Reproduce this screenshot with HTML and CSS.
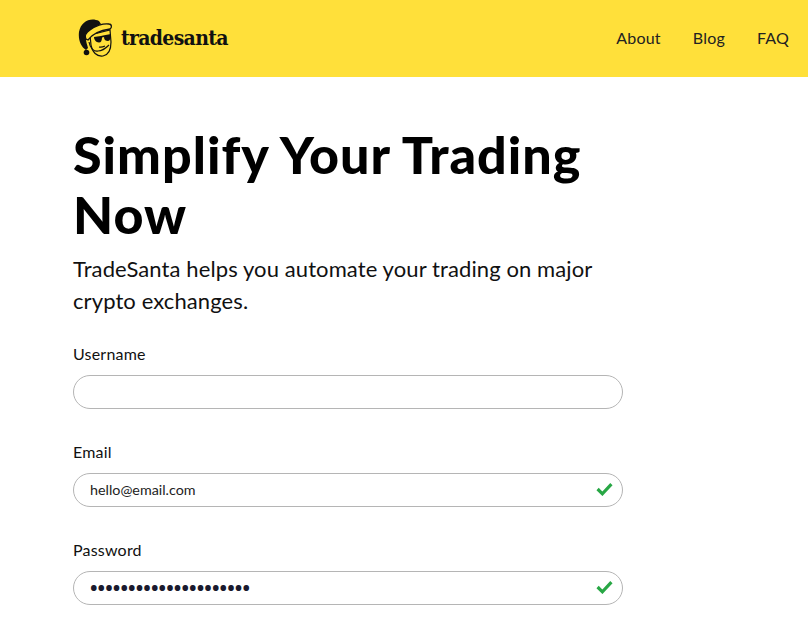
FILE: index.html
```html
<!DOCTYPE html>
<html>
<head>
<meta charset="utf-8">
<title>TradeSanta</title>
<link rel="stylesheet" href="styles.css">
</head>
<body>
<header class="topbar">
  <a class="logo" href="#">
    <svg class="logo-icon" width="38" height="41" viewBox="0 0 38 41">
      <path d="M22 3C14-1 4 3 2 14c-1 8 2 15 7 18l2-2c-1-4-2-6-2-9 3-7 9-12 15-15z" fill="#111"/>
      <path d="M13 17l1 10c1 7 6 12 12 11 5-1 8-6 8-14l-1-12z" fill="#ffe03a" stroke="#111" stroke-width="1.200"/>
      <path d="M9 21C7 17 10 14 13 12 18 8 26 5 32 6c3 0 3 4 1 5-7 1-17 4-22 11z" fill="#ffe03a" stroke="#111" stroke-width="1.300"/>
      <path d="M17 19l7-1 2-.5 8-1.500c0 4-1 7-3 7-2 0-4-1-4-4l-2 .5c0 3-1 5-3 5-3 0-5-3-5-5.500z" fill="#111"/>
      <path d="M12 24c1 6 5 10 9 9 4 0 7-2 11-6" fill="none" stroke="#111" stroke-width="1.200"/>
      <path d="M22 29c2 .5 4 0 6-1" fill="none" stroke="#111" stroke-width="1.200"/>
      <circle cx="9.500" cy="34.500" r="2.800" fill="#111"/>
    </svg>
    <span class="logo-text">tradesanta</span>
  </a>
  <nav class="nav">
    <a href="#">About</a>
    <a href="#">Blog</a>
    <a href="#">FAQ</a>
  </nav>
</header>
<main class="content">
  <h1>Simplify Your Trading Now</h1>
  <p class="lead">TradeSanta helps you automate your trading on major crypto exchanges.</p>
  <form>
    <div class="field">
      <label>Username</label>
      <div class="input"></div>
    </div>
    <div class="field">
      <label>Email</label>
      <div class="input">hello@email.com
        <svg class="check" width="17" height="14" viewBox="0 0 16 13"><path d="M1.500 6.500l4.500 4.500 8.500-9" fill="none" stroke="#28a745" stroke-width="3"/></svg>
      </div>
    </div>
    <div class="field">
      <label>Password</label>
      <div class="input dots">•••••••••••••••••••••
        <svg class="check" width="17" height="14" viewBox="0 0 16 13"><path d="M1.500 6.500l4.500 4.500 8.500-9" fill="none" stroke="#28a745" stroke-width="3"/></svg>
      </div>
    </div>
  </form>
</main>
</body>
</html>
```

FILE: styles.css
```css
html, body { margin: 0; padding: 0; height: 623px; overflow: hidden; }
body { font-family: Lato, "Open Sans", sans-serif; color: #000; background: #fff; }
a { color: inherit; text-decoration: none; }

.topbar { display: flex; align-items: center; justify-content: space-between; box-sizing: border-box; height: 77px; background: #ffe03a; padding: 0 19px 2px 77px; }
.logo { display: flex; align-items: center; gap: 6px; }
.logo-icon { margin-top: 2px; }
.logo-text { font-family: "DejaVu Serif Condensed", "DejaVu Serif", serif; font-weight: 700; font-size: 21px; letter-spacing: -0.7px; color: #111; }
.nav { display: flex; gap: 32px; font-size: 16px; letter-spacing: 0.2px; color: #222; }

.content { width: 550px; padding: 0 0 0 73px; }
h1 { margin: 47px 0 0; font-size: 52px; line-height: 60px; font-weight: 900; letter-spacing: 1px; }
.lead { margin: 9px 0 0; font-size: 22px; line-height: 32px; letter-spacing: 0.1px; color: #111; }

form { margin-top: 27px; }
.field { margin-bottom: 33px; }
label { display: block; font-size: 16px; line-height: 20px; margin-bottom: 11px; letter-spacing: 0.2px; color: #111; }
.input { position: relative; box-sizing: border-box; height: 34px; border: 1px solid #b5b5b5; border-radius: 17px; padding: 0 16px; font-size: 14.300px; line-height: 32px; color: #222; }
.input.dots { font-size: 20px; letter-spacing: 0.1px; color: #1a1a2e; font-family: "Noto Sans", sans-serif; font-weight: 700; }
.check { position: absolute; right: 9px; top: 8px; }
```
